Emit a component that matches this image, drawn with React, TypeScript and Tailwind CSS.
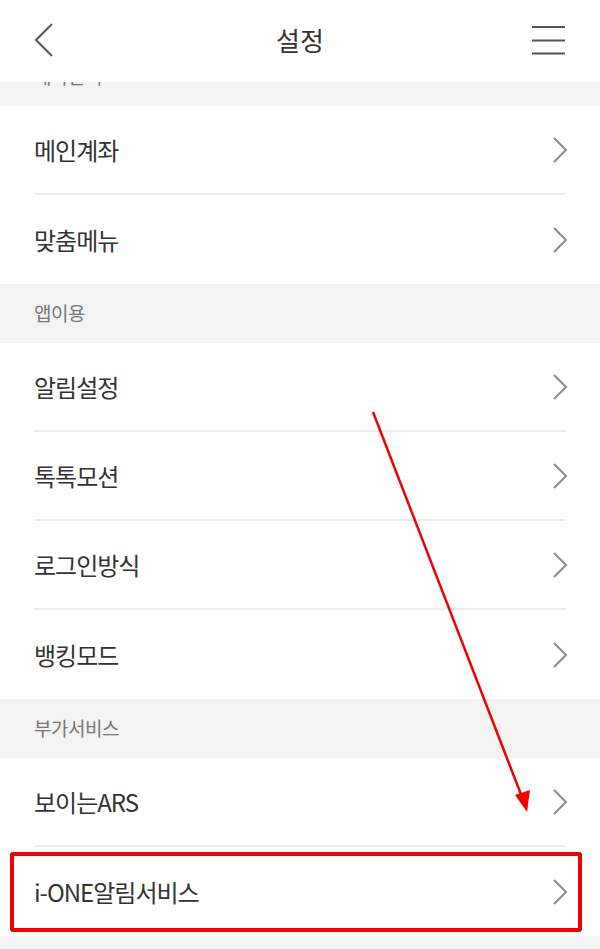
// Settings screen — grouped menu list with a red highlight annotation.
const font = { fontFamily: '"Noto Sans CJK KR", "Noto Sans", sans-serif' };

type Section = { title: string; items: string[] };

const sections: Section[] = [
  { title: "계좌관리", items: ["메인계좌", "맞춤메뉴"] },
  { title: "앱이용", items: ["알림설정", "톡톡모션", "로그인방식", "뱅킹모드"] },
  { title: "부가서비스", items: ["보이는ARS", "i-ONE알림서비스"] },
];

function Chevron() {
  return (
    <svg width="16" height="28" viewBox="0 0 16 28" fill="none">
      <path d="M2 2 L14 14 L2 26" stroke="#8a8a8a" strokeWidth="2" />
    </svg>
  );
}

function Row({ label, last, highlight }: { label: string; last: boolean; highlight?: boolean }) {
  return (
    <div className="relative bg-white px-[34px]">
      <div
        className={
          "flex h-[89px] items-center justify-between " +
          (last ? "" : "border-b-2 border-[#ececec]")
        }
      >
        <span className="text-[24px] tracking-[-1px] text-[#333]">{label}</span>
        <span className="mr-[-2px]">
          <Chevron />
        </span>
      </div>
      {highlight && (
        <div className="absolute left-[10px] right-[18px] top-[5px] bottom-[4px] rounded-[3px] border-[4px] border-[#f00000]" />
      )}
    </div>
  );
}

export default function App() {
  return (
    <div className="relative h-[949px] w-[600px] overflow-hidden bg-[#f3f3f3]" style={font}>
      {/* ---- header ---- */}
      <header className="relative z-10 grid h-[82px] grid-cols-[1fr_auto_1fr] items-center bg-white px-[34px]">
        <svg width="20" height="34" viewBox="0 0 20 34" fill="none" className="-mt-[2px]">
          <path d="M18 1 L2 17 L18 33" stroke="#555" strokeWidth="2" />
        </svg>
        <h1 className="-mt-[3px] text-[26px] text-[#333]">설정</h1>
        <svg width="34" height="30" viewBox="0 0 34 30" fill="none" className="-mt-[2px] justify-self-end">
          <path d="M0 2 H33 M0 15.5 H33 M0 28.5 H33" stroke="#555" strokeWidth="2" />
        </svg>
      </header>

      {/* ---- list ---- */}
      <div className="-mt-[35px]">
        {sections.map((s) => (
          <section key={s.title}>
            <div className="flex h-[59px] items-center bg-[#f3f3f3] px-[34px]">
              <span className="text-[19px] tracking-[-0.5px] text-[#777]">{s.title}</span>
            </div>
            {s.items.map((item, i) => (
              <Row
                key={item}
                label={item}
                last={i === s.items.length - 1}
                highlight={item === "i-ONE알림서비스"}
              />
            ))}
          </section>
        ))}
      </div>

      {/* ---- annotation arrow ---- */}
      <svg className="pointer-events-none absolute inset-0" width="600" height="949" viewBox="0 0 600 949">
        <line x1="373" y1="412" x2="522" y2="797" stroke="#f00000" strokeWidth="2.5" />
        <path d="M527 812 L515 795 L530 790 Z" fill="#f00000" />
      </svg>
    </div>
  );
}
